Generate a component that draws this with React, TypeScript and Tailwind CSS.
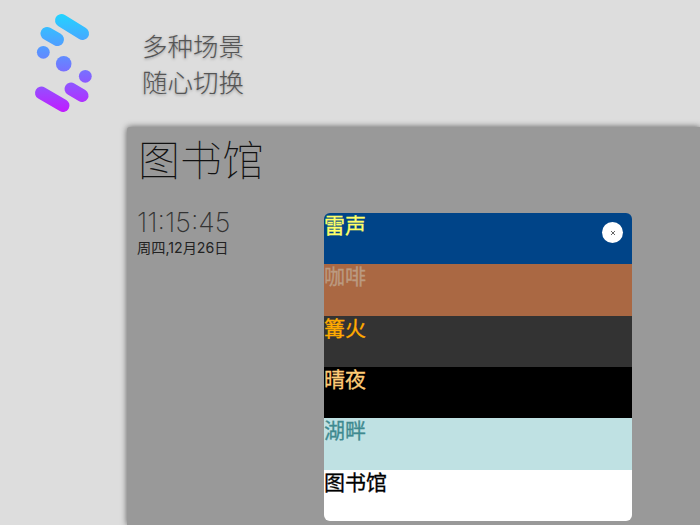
const FONT = "font-['Noto_Sans_CJK_SC','Noto_Sans_CJK_JP',sans-serif]"

const scenes = [
  { name: '雷声', bg: 'bg-[#004488]', fg: 'text-[#ffff66]' },
  { name: '咖啡', bg: 'bg-[#aa6843]', fg: 'text-[#bb9a80]' },
  { name: '篝火', bg: 'bg-[#333333]', fg: 'text-[#ffaa00]' },
  { name: '晴夜', bg: 'bg-black', fg: 'text-[#ffcc77]' },
  { name: '湖畔', bg: 'bg-[#bfe1e3]', fg: 'text-[#3f8a90]' },
  { name: '图书馆', bg: 'bg-white', fg: 'text-black' },
]

function Logo() {
  return (
    <svg width="70" height="110" viewBox="0 0 70 110" className="shrink-0">
      <defs>
        <linearGradient id="logo" gradientUnits="userSpaceOnUse" x1="35" y1="6" x2="35" y2="104">
          <stop offset="0" stopColor="#22d4ff" />
          <stop offset="0.5" stopColor="#6a80ff" />
          <stop offset="1" stopColor="#c11cff" />
        </linearGradient>
      </defs>
      <g stroke="url(#logo)" strokeWidth="13" strokeLinecap="round" fill="none">
        <path d="M31.5 12.5 52.5 25.5" />
        <path d="M17 25.5 27.5 31.5" />
        <path d="M41 81 52 87.5" />
        <path d="M11.5 85 33 97.5" />
      </g>
      <g fill="url(#logo)">
        <circle cx="13.3" cy="44.3" r="6.4" />
        <circle cx="33.7" cy="55.7" r="7.8" />
        <circle cx="55.3" cy="68.3" r="6.4" />
      </g>
    </svg>
  )
}

export default function App() {
  return (
    <div className={`w-[700px] h-[525px] overflow-hidden flex flex-col bg-[#dddddd] ${FONT}`}>
      <header className="h-[127px] shrink-0 flex items-start">
        <div className="ml-[30px] mt-[8px]">
          <Logo />
        </div>
        <div className="ml-[42px] mt-[27px] text-[25.5px] leading-[36px] font-extralight text-[#555555] [text-shadow:0_1px_3px_rgba(0,0,0,0.35)]">
          <div>多种场景</div>
          <div>随心切换</div>
        </div>
      </header>

      <main className="flex-1 ml-[127px] bg-[#999999] rounded-tl-[3px] shadow-[0_0_6px_rgba(0,0,0,0.6)] flex">
        <div className="w-[197px] shrink-0 pl-[10px]">
          <h1 className="text-[42px] leading-[62px] font-thin text-[#111111] ml-[1px]">图书馆</h1>
          <div className="mt-[19px] text-[27px] leading-[30px] font-['Inter',sans-serif] font-extralight text-[#333333]">11:15:45</div>
          <div className="text-[14.2px] leading-[20px] font-['Inter','Noto_Sans_CJK_SC',sans-serif] font-normal text-[#222222]">周四,12月26日</div>
        </div>
        <div className="mt-[86px] w-[308px] h-[308px] rounded-[6px] overflow-hidden relative flex flex-col">
          {scenes.map((s) => (
            <div key={s.name} className={`flex-1 ${s.bg}`}>
              <div className={`text-[21px] leading-[22px] [-webkit-text-stroke:0.3px_currentColor] ${s.fg}`}>{s.name}</div>
            </div>
          ))}
          <button className="absolute right-[9px] top-[9px] w-[21px] h-[21px] rounded-full bg-white flex items-center justify-center">
            <svg width="6" height="6" viewBox="0 0 6 6" stroke="#666666" strokeWidth="1">
              <path d="M1 1 5 5M5 1 1 5" />
            </svg>
          </button>
        </div>
      </main>
    </div>
  )
}
